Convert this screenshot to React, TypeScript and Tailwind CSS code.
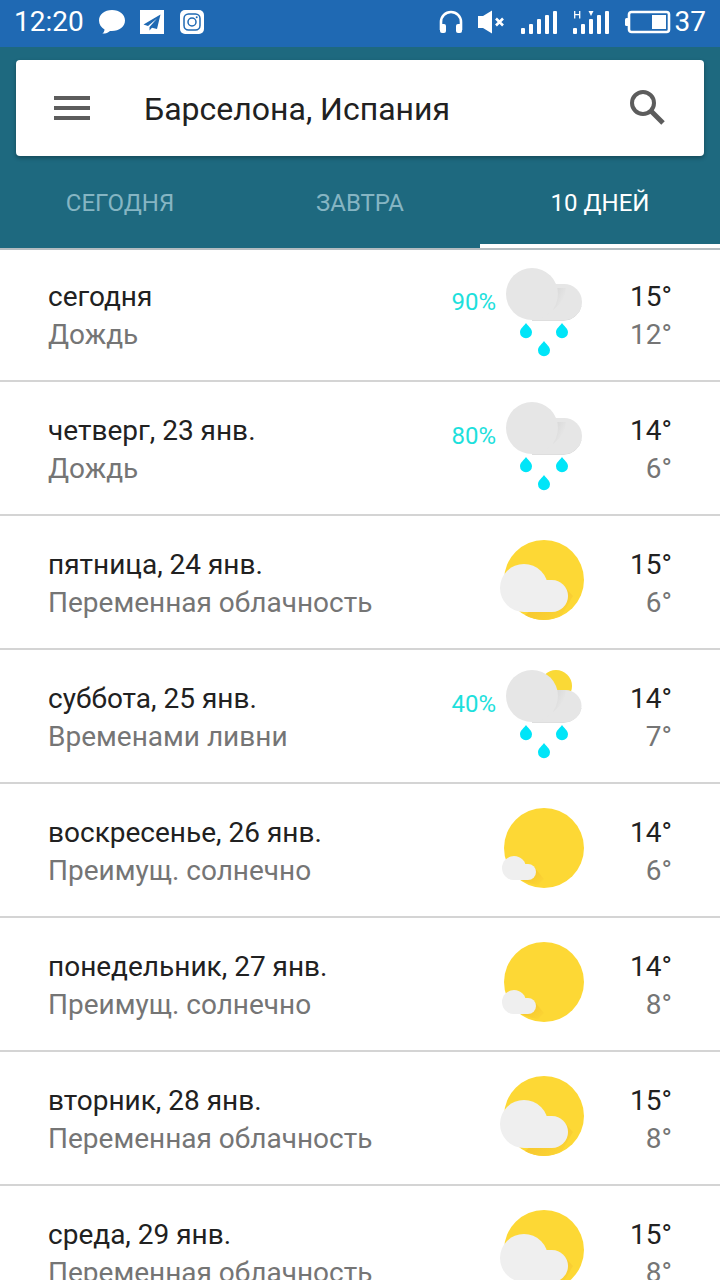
import { useState } from "react";

type WeatherKind = "rain" | "showers" | "partly" | "sunny";

interface Day {
  label: string;
  summary: string;
  kind: WeatherKind;
  chance?: string;
  high: string;
  low: string;
}

const days: Day[] = [
  { label: "сегодня", summary: "Дождь", kind: "rain", chance: "90%", high: "15°", low: "12°" },
  { label: "четверг, 23 янв.", summary: "Дождь", kind: "rain", chance: "80%", high: "14°", low: "6°" },
  { label: "пятница, 24 янв.", summary: "Переменная облачность", kind: "partly", high: "15°", low: "6°" },
  { label: "суббота, 25 янв.", summary: "Временами ливни", kind: "showers", chance: "40%", high: "14°", low: "7°" },
  { label: "воскресенье, 26 янв.", summary: "Преимущ. солнечно", kind: "sunny", high: "14°", low: "6°" },
  { label: "понедельник, 27 янв.", summary: "Преимущ. солнечно", kind: "sunny", high: "14°", low: "8°" },
  { label: "вторник, 28 янв.", summary: "Переменная облачность", kind: "partly", high: "15°", low: "8°" },
  { label: "среда, 29 янв.", summary: "Переменная облачность", kind: "partly", high: "15°", low: "8°" },
];

const tabs = ["СЕГОДНЯ", "ЗАВТРА", "10 ДНЕЙ"];

const Drop = ({ x, y }: { x: number; y: number }) => (
  <path
    d="M0 0C1.5 2.5 6 5.5 6 9.2A6 6 0 0 1-6 9.2C-6 5.5-1.5 2.5 0 0Z"
    transform={`translate(${x} ${y})`}
    fill="#00e5f8"
  />
);

const WeatherIcon = ({ kind }: { kind: WeatherKind }) => {
  if (kind === "rain" || kind === "showers") {
    return (
      <svg viewBox="0 0 96 96" className="w-24 h-24 shrink-0" aria-hidden="true">
        <defs>
          <linearGradient id={`fold-${kind}`} gradientUnits="userSpaceOnUse" x1="60" y1="28" x2="69" y2="32">
            <stop offset="0" stopColor="#dadada" />
            <stop offset="1" stopColor="#e6e6e6" />
          </linearGradient>
        </defs>
        {kind === "showers" && <circle cx="60" cy="20" r="16" fill="#fad936" />}
        <path d="M36 56.300H68A17.600 17.600 0 0 0 85 42" fill="none" stroke="#d6d6d6" />
        <path
          d={
            kind === "showers"
              ? "M36 24H69.500A16 16 0 0 1 69.500 56H36Z"
              : "M36 20H68A18 18 0 0 1 68 56H36Z"
          }
          fill="#e6e6e6"
        />
        {/* soft shadow where the big puff overlaps the small one */}
        <path d="M61 24H70Q70 36 57 46Z" fill={`url(#fold-${kind})`} />
        <circle cx="36" cy="30" r="26" fill="#e6e6e6" />
        <Drop x={30} y={59} />
        <Drop x={66} y={59} />
        <Drop x={48} y={77} />
      </svg>
    );
  }

  return (
    <svg viewBox="0 0 96 96" className="w-24 h-24 shrink-0" aria-hidden="true">
      <defs>
        <linearGradient id={`shade-${kind}`} x1="0" y1="0" x2="1" y2="1">
          <stop offset="0.3" stopColor="#f5c52f" />
          <stop offset="1" stopColor="#fdd835" />
        </linearGradient>
      </defs>
      <circle cx="48" cy="48" r="40" fill="#fdd835" />
      {kind === "partly" ? (
        <>
          <path d="M67 53L77 64L66 83Q57 88 48 88Q38 88 29 83Z" fill="url(#shade-partly)" />
          <circle cx="28" cy="56" r="24" fill="#efefef" />
          <path d="M28 48H56A16 16 0 0 1 56 80H28Z" fill="#efefef" />
        </>
      ) : (
        <>
          <path d="M38 67L48 79L42 85Q30 83 24 79Z" fill="url(#shade-sunny)" />
          <circle cx="18" cy="68" r="12" fill="#efefef" />
          <path d="M18 64H32A8 8 0 0 1 32 80H18Z" fill="#efefef" />
        </>
      )}
    </svg>
  );
};

const StatusBar = () => (
  <div className="flex items-center justify-between h-[47px] px-3.5 pb-1 bg-[#1f69b3] text-white text-[28px] leading-8">
    <div className="flex items-center">
      <span>12:20</span>
      <svg width="28" height="26" viewBox="0 0 28 26" className="ml-3.5" fill="#fff" aria-hidden="true">
        <path d="M14 1C6.500 1 1 5.600 1 11.500C1 15.400 3.200 18.600 6.500 20.400C6.500 22.300 5.500 23.700 4.200 24.600C7.500 24.800 10.200 23.500 12 21.900C20.500 22.600 27 18.200 27 11.500C27 5.600 21.500 1 14 1Z" />
      </svg>
      <svg width="24" height="24" viewBox="0 0 24 24" className="ml-3.5" aria-hidden="true">
        <rect width="24" height="24" fill="#fff" />
        <path d="M20.500 4.500L3.500 14.500L8 16L17 8.500L9.500 17V20.500L12 17.800L17 19Z" fill="#1f69b3" />
      </svg>
      <svg width="24" height="24" viewBox="0 0 24 24" className="ml-4" aria-hidden="true">
        <rect width="24" height="24" rx="5" fill="#fff" />
        <g fill="none" stroke="#1f69b3" strokeWidth="1.500">
          <rect x="4" y="4" width="16" height="16" rx="4.500" />
          <circle cx="12" cy="12" r="4" />
        </g>
        <circle cx="16.700" cy="7.300" r="1" fill="#1f69b3" />
      </svg>
    </div>

    <div className="flex items-center">
      <svg width="24" height="24" viewBox="0 0 24 24" aria-hidden="true">
        <path d="M2 20V12A10 10 0 0 1 22 12V20" fill="none" stroke="#fff" strokeWidth="2.600" />
        <rect x="1" y="14" width="6" height="9" rx="2" fill="#fff" />
        <rect x="17" y="14" width="6" height="9" rx="2" fill="#fff" />
      </svg>
      <svg width="28" height="24" viewBox="0 0 28 24" className="ml-3.5" aria-hidden="true">
        <path d="M1 6H6L15 0.500V23.500L6 18H1Z" fill="#fff" />
        <path d="M19 8.500L26 15.500M26 8.500L19 15.500" stroke="#fff" strokeWidth="2.600" />
      </svg>
      <svg width="38" height="24" viewBox="0 0 38 24" className="ml-4" fill="#fff" aria-hidden="true">
        <rect x="0" y="18" width="4" height="6" rx="1" />
        <rect x="8" y="14" width="4" height="10" rx="1" />
        <rect x="16" y="9" width="4" height="15" rx="1" />
        <rect x="24" y="5" width="4" height="19" rx="1" />
        <rect x="32" y="1" width="4" height="23" rx="1" />
      </svg>
      <svg width="38" height="24" viewBox="0 0 38 24" className="ml-3.5" fill="#fff" aria-hidden="true">
        <path d="M1.700 1V8.500M6.700 1V8.500M1.700 4.700H6.700" stroke="#fff" strokeWidth="1.300" />
        <rect x="0" y="18" width="4" height="6" rx="1" />
        <rect x="8" y="14" width="4" height="10" rx="1" />
        <rect x="16" y="9" width="4" height="15" rx="1" />
        <path d="M15.500 1H20.500L18 6Z" />
        <rect x="24" y="5" width="4" height="19" rx="1" />
        <rect x="32" y="1" width="4" height="23" rx="1" />
      </svg>
      <svg width="46" height="24" viewBox="0 0 46 24" className="ml-3.5" aria-hidden="true">
        <rect x="4" y="2" width="40" height="20" rx="2.500" fill="none" stroke="#fff" strokeWidth="2.600" />
        <rect x="0" y="8" width="4" height="8" rx="1.500" fill="#fff" />
        <rect x="27" y="5" width="14" height="14" fill="#fff" />
      </svg>
      <span className="ml-1">37</span>
    </div>
  </div>
);

const SearchCard = () => (
  <div className="flex items-center h-24 mx-4 px-9 bg-white rounded shadow-[0_2px_4px_rgba(0,0,0,0.3)]">
    <button type="button" aria-label="Меню">
      <svg width="40" height="40" viewBox="0 0 40 40" fill="#5c5c5c">
        <rect x="2" y="8" width="36" height="4" />
        <rect x="2" y="18" width="36" height="4" />
        <rect x="2" y="28" width="36" height="4" />
      </svg>
    </button>
    <h1 className="flex-1 ml-13 pt-0.5 text-[32px] leading-10 text-[#212121]">
      Барселона, Испания
    </h1>
    <button type="button" aria-label="Поиск">
      <svg width="40" height="40" viewBox="0 0 40 40" fill="none" stroke="#5c5c5c">
        <circle cx="15" cy="15" r="11" strokeWidth="4" />
        <path d="M23 23L35 35" strokeWidth="5" />
      </svg>
    </button>
  </div>
);

const DayRow = ({ day }: { day: Day }) => (
  <li className="flex items-start px-12 pt-4 pb-5 first:pt-3.5 border-b-2 border-[#d4d4d4]">
    <div className="flex-1 pt-3.5 text-[28px] leading-[38px]">
      <p className="text-[#212121]">{day.label}</p>
      <p className="text-[#757575]">{day.summary}</p>
    </div>
    {day.chance && (
      <span className="pt-5 text-2xl leading-9 text-[#1de0dc]">{day.chance}</span>
    )}
    <WeatherIcon kind={day.kind} />
    <div className="w-20 pt-3.5 text-right text-[28px] leading-[38px]">
      <p className="text-[#212121]">{day.high}</p>
      <p className="text-[#757575]">{day.low}</p>
    </div>
  </li>
);

const App: React.FC = () => {
  const [active, setActive] = useState("10 ДНЕЙ");

  return (
    <div className="flex flex-col h-screen bg-white font-['Roboto',sans-serif]">
      <StatusBar />

      <header className="pt-[13px] bg-[#1e697f] border-b-2 border-[#b4bcc0]">
        <SearchCard />
        <nav className="flex mt-1">
          {tabs.map((tab) => (
            <button
              key={tab}
              type="button"
              onClick={() => setActive(tab)}
              className={`flex-1 h-[88px] pt-0.5 border-b-4 text-2xl ${
                tab === active
                  ? "border-white text-white"
                  : "border-transparent text-[#86b5c3]"
              }`}
            >
              {tab}
            </button>
          ))}
        </nav>
      </header>

      <ul className="flex-1 min-h-0 overflow-y-auto [scrollbar-width:none]">
        {days.map((day) => (
          <DayRow key={day.label} day={day} />
        ))}
      </ul>
    </div>
  );
};

export default App;
